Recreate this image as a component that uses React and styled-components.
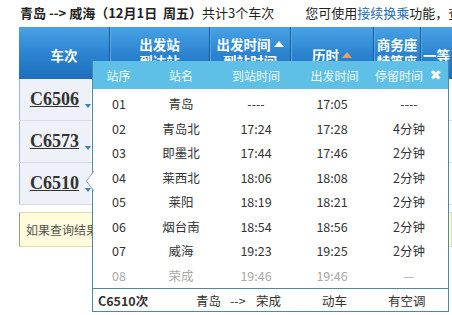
import React from 'react';
import styled, { createGlobalStyle } from 'styled-components';

const GlobalStyle = createGlobalStyle`
  body {
    margin: 0;
    background: #fff;
    font-family: Tahoma, "Noto Sans CJK SC", "Noto Sans", sans-serif;
  }
`;

const stops = [
    ['01', '青岛', '----', '17:05', '----'],
    ['02', '青岛北', '17:24', '17:28', '4分钟'],
    ['03', '即墨北', '17:44', '17:46', '2分钟'],
    ['04', '莱西北', '18:06', '18:08', '2分钟'],
    ['05', '莱阳', '18:19', '18:21', '2分钟'],
    ['06', '烟台南', '18:54', '18:56', '2分钟'],
    ['07', '威海', '19:23', '19:25', '2分钟'],
    ['08', '荣成', '19:46', '19:46', '—', true],
];

const trains = ['C6506', 'C6573', 'C6510'];

const App = () => (
    <Page>
        <GlobalStyle />
        <TitleBar>
            <b>青岛 --&gt; 威海（12月1日&nbsp;&nbsp;周五）</b>
            <span>共计3个车次</span>
            <Hint>
                您可使用<a>接续换乘</a>功能，查
            </Hint>
        </TitleBar>

        <Table>
            <HeadRow>
                <HeadCell>车次</HeadCell>
                <HeadCell $top>
                    <span>出发站</span>
                    <span>到达站</span>
                </HeadCell>
                <HeadCell $top>
                    <span>出发时间<Sort $color="#ffffff" /></span>
                    <span>到站时间</span>
                </HeadCell>
                <HeadCell>
                    <span>历时<Sort $color="#e0a070" /></span>
                </HeadCell>
                <HeadCell $top>
                    <span>商务座</span>
                    <span>特等座</span>
                </HeadCell>
                <HeadCell $last>一等</HeadCell>
            </HeadRow>

            {trains.map((t) => (
                <Row key={t}>
                    <TrainCell>
                        <TrainNo>{t}</TrainNo>
                    </TrainCell>
                    <RestCell />
                </Row>
            ))}

            <Notice>
                <NoticeText>如果查询结果中没有满足需求的车次，请尝试使用接续换乘功能。</NoticeText>
            </Notice>

            <Popup>
                <Pointer viewBox="0 0 8 20" width="8" height="20">
                    <path d="M8 0 L0.5 10 L8 20 Z" fill="#fff" />
                    <path d="M8 0 L0.5 10 L8 20" fill="none" stroke="#8fa5b3" strokeWidth="1" />
                </Pointer>
                <PopHead>
                    <span>站序</span>
                    <span>站名</span>
                    <span>到站时间</span>
                    <span>出发时间</span>
                    <span>停留时间</span>
                    <Close>✖</Close>
                </PopHead>
                <StopList>
                    {stops.map(([no, name, arr, dep, stay, off]) => (
                        <StopRow key={no} $off={off}>
                            <span>{no}</span>
                            <span>{name}</span>
                            <span>{arr}</span>
                            <span>{dep}</span>
                            <span>{stay}</span>
                        </StopRow>
                    ))}
                </StopList>
                <PopFoot>
                    <b>C6510次</b>
                    <span>青岛</span>
                    <span>--&gt;</span>
                    <span>荣成</span>
                    <span>动车</span>
                    <span>有空调</span>
                </PopFoot>
            </Popup>
        </Table>
    </Page>
);

const Page = styled.div`
  width: 452px;
  height: 315px;
  overflow: hidden;
`;

const TitleBar = styled.div`
  display: flex;
  align-items: center;
  height: 25px;
  padding: 0 0 2px 20px;
  font-size: 13px;
  color: #222;
  white-space: nowrap;
  overflow: hidden;

  b {
    font-weight: bold;
  }
`;

const Hint = styled.span`
  margin-left: 31px;

  a {
    color: #1d6bb4;
  }
`;

const Table = styled.div`
  position: relative;
  margin-left: 19px;
  width: 433px;
`;

const HeadRow = styled.div`
  display: grid;
  grid-template-columns: 91px 100px 81px 83px 47px 1fr;
  height: 52px;
  background: linear-gradient(#48a2e4, #2a82cf 55%, #1c6ebb);
  overflow: hidden;
`;

const HeadCell = styled.div`
  display: flex;
  flex-direction: column;
  align-items: center;
  justify-content: ${(p) => (p.$top ? 'flex-start' : 'center')};
  padding-top: ${(p) => (p.$top ? '9px' : '4px')};
  line-height: 17px;
  color: #fff;
  font-size: 13.5px;
  font-weight: bold;
  border-right: ${(p) => (p.$last ? 'none' : '1px solid #1a5f9e')};
  box-shadow: ${(p) => (p.$last ? 'none' : '1px 0 0 #5aa8e0')};
  white-space: nowrap;
`;

const Sort = styled.i`
  display: inline-block;
  width: 0;
  height: 0;
  margin-left: 3px;
  vertical-align: 3px;
  border-left: 5px solid transparent;
  border-right: 5px solid transparent;
  border-bottom: 6px solid ${(p) => p.$color};
`;

const Row = styled.div`
  display: flex;
  height: 41px;
  border-bottom: 1px solid #d4dce8;
`;

const TrainCell = styled.div`
  position: relative;
  width: 72px;
  display: flex;
  align-items: center;
  padding-left: 10px;
  box-sizing: border-box;
  background: #eef1f7;
  border-left: 1px solid #9fb3c8;

  &::after {
    content: '';
    position: absolute;
    right: 0;
    bottom: 12px;
    border-left: 3px solid transparent;
    border-right: 3px solid transparent;
    border-top: 4px solid #3a7fb5;
  }
`;

const TrainNo = styled.span`
  font-family: "Liberation Serif", "Times New Roman", serif;
  font-weight: bold;
  font-size: 18px;
  color: #333;
  text-decoration: underline;
`;

const RestCell = styled.div`
  flex: 1;
`;

const Notice = styled.div`
  margin-top: 7px;
  height: 33px;
  display: flex;
  align-items: center;
  padding-left: 6px;
  background: #fffbdd;
  border: 1px solid #e5dca0;
  border-left-color: #9b9b80;
  font-size: 12px;
  color: #555;
  white-space: nowrap;
`;

const NoticeText = styled.span`
  display: block;
  width: 66px;
  overflow: hidden;
`;

const Popup = styled.div`
  position: absolute;
  left: 73px;
  top: 34px;
  width: 357px;
  box-sizing: border-box;
  background: #fff;
  border: 1px solid #4b8aa5;
  border-top: none;
  font-size: 12px;
  color: #333;
`;

const Pointer = styled.svg`
  position: absolute;
  left: -7px;
  top: 110px;
`;

const PopHead = styled.div`
  display: grid;
  grid-template-columns: 51px 74px 76px 81px 48px 1fr;
  align-items: center;
  height: 28px;
  background: #5ec0e6;
  color: #f0faff;
  text-align: center;
  white-space: nowrap;
`;

const Close = styled.span`
  color: #fff;
  font-size: 14px;
  font-family: "DejaVu Sans", sans-serif;
`;

const StopList = styled.div`
  padding-top: 3px;
`;

const StopRow = styled.div`
  display: grid;
  grid-template-columns: 51px 74px 76px 76px 1fr;
  height: 24.5px;
  align-items: center;
  text-align: center;
  font-size: 12.5px;
  line-height: 16px;
  color: ${(p) => (p.$off ? '#aaa' : '#333')};
  white-space: nowrap;

  span:first-child {
    text-align: left;
    padding-left: 19px;
  }
`;

const PopFoot = styled.div`
  display: grid;
  grid-template-columns: 98px 34px 26px 66px 66px 1fr;
  align-items: center;
  height: 22px;
  border-top: 1px solid #4b8aa5;
  padding-left: 5px;
  font-size: 12.5px;
  color: #333;
  white-space: nowrap;

  b {
    font-size: 12.5px;
  }
`;

export default App;
